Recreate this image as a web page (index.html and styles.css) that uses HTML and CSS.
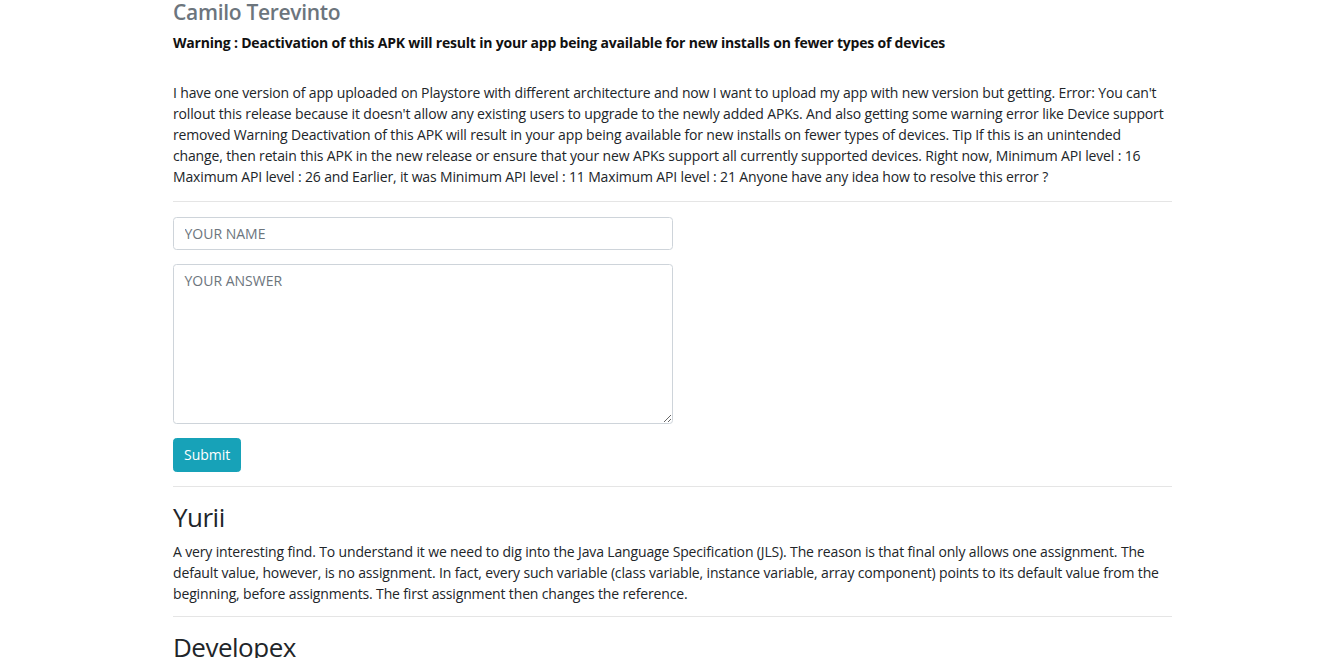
FILE: index.html
```html
<!DOCTYPE html>
<html lang="en">
<head>
<meta charset="utf-8">
<title>Question</title>
<link rel="stylesheet" href="styles.css">
</head>
<body>
<main class="page">
  <section class="question">
    <h4 class="author muted">Camilo Terevinto</h4>
    <h6 class="q-title">Warning : Deactivation of this APK will result in your app being available for new installs on fewer types of devices</h6>
    <p class="text">I have one version of app uploaded on Playstore with different architecture and now I want to upload my app with new version but getting. Error: You can't rollout this release because it doesn't allow any existing users to upgrade to the newly added APKs. And also getting some warning error like Device support removed Warning Deactivation of this APK will result in your app being available for new installs on fewer types of devices. Tip If this is an unintended change, then retain this APK in the new release or ensure that your new APKs support all currently supported devices. Right now, Minimum API level : 16 Maximum API level : 26 and Earlier, it was Minimum API level : 11 Maximum API level : 21 Anyone have any idea how to resolve this error ?</p>
  </section>
  <hr class="rule">
  <form class="answer-form">
    <div class="form-group">
      <input class="form-control" type="text" placeholder="YOUR NAME">
    </div>
    <div class="form-group">
      <textarea class="form-control area" placeholder="YOUR ANSWER"></textarea>
    </div>
    <button class="btn" type="button">Submit</button>
  </form>
  <hr class="rule">
  <section class="answer">
    <h2 class="ans-name">Yurii</h2>
    <p class="text text-last">A very interesting find. To understand it we need to dig into the Java Language Specification (JLS). The reason is that final only allows one assignment. The default value, however, is no assignment. In fact, every such variable (class variable, instance variable, array component) points to its default value from the beginning, before assignments. The first assignment then changes the reference.</p>
  </section>
  <hr class="rule rule-tight">
  <section class="answer">
    <h2 class="ans-name">Developex</h2>
  </section>
</main>
</body>
</html>
```
FILE: styles.css
```css
html { font-size: 14px; }
* { box-sizing: border-box; }
body {
  margin: 0;
  font-family: "Open Sans", "Noto Sans", sans-serif;
  font-size: 14px;
  line-height: 1.5;
  color: #212529;
  background: #fff;
  overflow: hidden;
}
.page {
  width: 999px;
  margin-left: 173px;
}
.author {
  margin: 0 0 7px;
  font-size: 21px;
  line-height: 1.2;
  font-weight: 600;
  letter-spacing: -0.3px;
}
.muted { color: #6c757d; }
.q-title {
  margin: 0 0 29px;
  font-size: 14px;
  line-height: 1.5;
  font-weight: 700;
  letter-spacing: -0.2px;
  color: #111;
}
.text {
  margin: 0 0 14px;
  letter-spacing: -0.15px;
}
.text-last { margin-bottom: 12px; }
.rule {
  margin: 14px 0;
  border: 0;
  border-top: 1px solid rgba(0,0,0,.1);
}
.rule-tight { margin-top: 12px; }
.answer-form { padding-top: 1px; }
.form-group { margin-bottom: 14px; }
.form-control {
  display: block;
  width: 500px;
  height: 33px;
  padding: 5.25px 10.5px;
  font-family: inherit;
  font-size: 14px;
  line-height: 1.5;
  color: #495057;
  background: #fff;
  border: 1px solid #ced4da;
  border-radius: 3.5px;
}
.form-control::placeholder { color: #6c757d; opacity: 1; }
.area { height: 160px; }
.btn {
  display: block;
  height: 33.5px;
  padding: 5.25px 10px;
  font-family: inherit;
  font-size: 14px;
  line-height: 1.5;
  color: #fff;
  background: #17a2b8;
  border: 1px solid #17a2b8;
  border-radius: 3.5px;
}
.ans-name {
  margin: 0 0 7px;
  font-size: 26px;
  line-height: 1.29;
  font-weight: 500;
  letter-spacing: -0.5px;
}
```
